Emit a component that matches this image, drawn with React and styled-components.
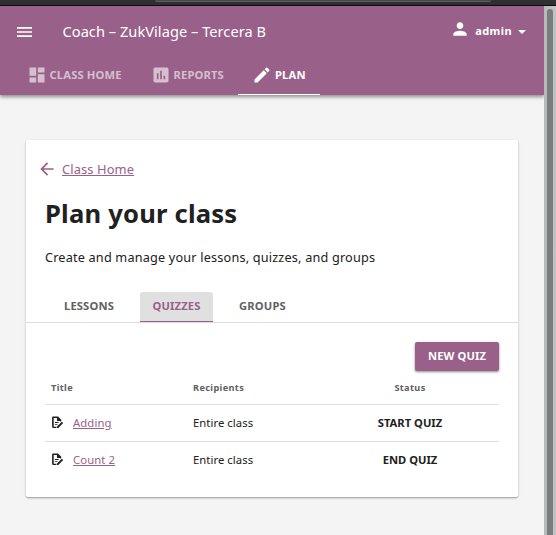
import React from 'react';
import styled, { createGlobalStyle } from 'styled-components';

const GlobalStyle = createGlobalStyle`
  * { box-sizing: border-box; }
  html, body { margin: 0; height: 100%; overflow: hidden; }
  body { background: #f4f4f4; color: #212121; font-family: "Noto Sans", sans-serif; }
`;

const purple = '#996189';

const Window = styled.div`
  height: 535px;
  display: flex;
  flex-direction: column;
`;
const BrowserEdge = styled.div`
  flex: none;
  height: 6px;
  background: #2f2f31;
  border-bottom: 1px solid #0c0c0d;
  padding-left: 155px;
`;
const AddressBar = styled.div`
  width: 336px;
  height: 2px;
  background: #474749;
  border-bottom: 1px solid #5f5f62;
  border-radius: 0 0 3px 3px;
`;
const Viewport = styled.div`
  flex: 1;
  display: flex;
  min-height: 0;
`;
const Page = styled.main`
  width: 544px;
  overflow: hidden;
`;
const Scrollbar = styled.div`
  width: 12px;
  padding: 3px 3px 0;
  background: linear-gradient(90deg, #b5b9b8, #c4c4c4);
`;
const Thumb = styled.div`
  height: 100%;
  background: #787e7e;
  border-radius: 3px 3px 0 0;
`;
const AppBar = styled.header`
  height: 89px;
  background: ${purple};
  color: #fff;
  box-shadow: 0 2px 4px rgba(0,0,0,.25), 0 2px 3px rgba(0,0,0,.2);
`;
const TopRow = styled.div`
  height: 50px;
  display: flex;
  align-items: center;
  padding: 1px 18px 0 15px;
`;
const AppTitle = styled.div`
  flex: 1;
  margin-left: 27.5px;
  padding-bottom: 2px;
  font-size: 14.6px;
  letter-spacing: 0.04px;
  line-height: 20px;
  white-space: nowrap;
`;
const UserButton = styled.div`
  display: flex;
  align-items: center;
  font-size: 11px;
  letter-spacing: 0.4px;
  font-weight: 700;
  padding-bottom: 2px;
`;
const UserIconSlot = styled.span`
  padding-bottom: 3px;
`;
const UserName = styled.span`
  margin: 0 6px 0 5px;
`;
const Caret = styled.span`
  border: 4px solid transparent;
  border-top-color: #fff;
  border-bottom: 0;
  margin-top: 2px;
`;
const NavRow = styled.nav`
  height: 39px;
  display: flex;
  padding-left: 11px;
`;
const NavItem = styled.a`
  height: 39px;
  width: ${p => p.$width}px;
  display: flex;
  align-items: center;
  gap: ${p => (p.$active ? 3 : 2.5)}px;
  padding: 0 0 2px ${p => (p.$active ? 14 : 16)}px;
  color: ${p => (p.$active ? '#fff' : 'rgba(255,255,255,.6)')};
  box-shadow: inset 0 -1px ${p => (p.$active ? '#fff' : 'transparent')};
  font-size: 11.2px;
  letter-spacing: 0.15px;
  font-weight: 700;
  white-space: nowrap;
`;
const Icon = styled.svg`
  flex: none;
  display: block;
  width: ${p => p.$size || 20}px;
  height: ${p => p.$size || 20}px;
  fill: currentColor;
`;
const Card = styled.section`
  width: 492px;
  height: 357px;
  margin: 45px 0 0 26px;
  background: #fff;
  border-radius: 2px;
  box-shadow: 0 1px 3px rgba(0,0,0,.2), 0 1px 1px rgba(0,0,0,.2);
`;
const BackRow = styled.div`
  display: flex;
  align-items: center;
  height: 20px;
  padding-left: 11px;
  margin-bottom: 23px;
  color: ${purple};
`;
const Link = styled.a`
  color: ${purple};
  font-size: ${p => p.$size || 12}px;
  text-decoration: underline;
  margin-left: ${p => p.$gap}px;
  letter-spacing: 0.1px;
`;
const CardHead = styled.div`
  padding-top: 19px;
`;
const Heading = styled.h1`
  margin: 0 0 22px 19px;
  font-size: 25.6px;
  letter-spacing: 0.2px;
  line-height: 24px;
  font-weight: 700;
`;
const Intro = styled.p`
  margin: 0 0 26px 19px;
  font-size: 12.7px;
  letter-spacing: 0.18px;
  line-height: 18px;
`;
const Tabs = styled.div`
  height: 31px;
  border-bottom: 1px solid #dedede;
  display: flex;
  padding-left: 26px;
  gap: 14px;
`;
const Tab = styled.div`
  height: 30px;
  width: ${p => p.$width}px;
  display: flex;
  align-items: center;
  justify-content: center;
  padding-bottom: 3px;
  border-radius: 3px 3px 0 0;
  font-size: 11.2px;
  letter-spacing: 0.15px;
  font-weight: 700;
  color: ${p => (p.$active ? purple : '#616161')};
  background: ${p => (p.$active ? '#e0e0e0' : 'transparent')};
  box-shadow: inset 0 -1px ${p => (p.$active ? purple : 'transparent')};
`;
const Actions = styled.div`
  display: flex;
  justify-content: flex-end;
  padding: 19px 19px 0 0;
`;
const PrimaryButton = styled.button`
  width: 84px;
  height: 29px;
  padding: 0 0 2px;
  border: 0;
  border-radius: 2px;
  background: ${purple};
  color: #fff;
  font: 700 11.2px "Noto Sans", sans-serif;
  letter-spacing: 0.1px;
  box-shadow: 0 1px 3px rgba(0,0,0,.3), 0 1px 2px rgba(0,0,0,.2);
`;
const Table = styled.div`
  margin: 0 19px;
`;
const Row = styled.div`
  display: grid;
  grid-template-columns: 142px 171px 92px;
  align-items: center;
  height: ${p => (p.$head ? 34 : 37)}px;
  padding: 0 0 ${p => (p.$head ? 0 : 1)}px 6px;
  font-size: ${p => (p.$head ? 9.2 : 11.3)}px;
  letter-spacing: ${p => (p.$head ? 0.35 : 0.05)}px;
  font-weight: ${p => (p.$head ? 700 : 400)};
  color: ${p => (p.$head ? '#616161' : '#212121')};
  border-bottom: 1px solid ${p => (p.$last ? 'transparent' : '#dedede')};
`;
const Cell = styled.div`
  display: flex;
  align-items: center;
`;
const Status = styled.div`
  text-align: center;
  font-weight: 700;
`;
const StatusAction = styled(Status)`
  font-size: 11.2px;
  letter-spacing: 0;
`;

const QuizIcon = () => (
  <Icon $size={13} viewBox="0 0 24 24">
    <path d="M4 1h9l6 6v2l-2 2V9h-6V3.500H5V20h5v2H4c-1 0-2-1-2-2V3c0-1 1-2 2-2z" />
    <path d="M7 11h7v1.800H7zM7 15h5v1.800H7zM11 19.500l9-9 2.500 2.500-9 9H11z" />
  </Icon>
);

const quizzes = [
  { title: 'Adding', status: 'START QUIZ' },
  { title: 'Count 2', status: 'END QUIZ' },
];

export default function App() {
  return (
    <Window>
      <GlobalStyle />
      <BrowserEdge><AddressBar /></BrowserEdge>
      <Viewport>
        <Page>
          <AppBar>
            <TopRow>
              <Icon viewBox="0.600 0 24 24">
                <path d="M3 18h18v-2H3v2zm0-5h18v-2H3v2zm0-7v2h18V6H3z" />
              </Icon>
              <AppTitle>Coach – ZukVilage – Tercera B</AppTitle>
              <UserButton>
                <UserIconSlot>
                  <Icon viewBox="0 0 24 24">
                    <path d="M12 12c2.210 0 4-1.790 4-4s-1.790-4-4-4-4 1.790-4 4 1.790 4 4 4zm0 2c-2.670 0-8 1.340-8 4v2h16v-2c0-2.660-5.330-4-8-4z" />
                  </Icon>
                </UserIconSlot>
                <UserName>admin</UserName>
                <Caret />
              </UserButton>
            </TopRow>
            <NavRow>
              <NavItem $width={124}>
                <Icon viewBox="0 0 24 24"><path d="M3 13h8V3H3v10zm0 8h8v-6H3v6zm10 0h8V11h-8v10zm0-18v6h8V3h-8z" /></Icon>
                <span>CLASS HOME</span>
              </NavItem>
              <NavItem $width={103}>
                <Icon viewBox="0 0 24 24"><path d="M19 3H5c-1.100 0-2 .9-2 2v14c0 1.100.9 2 2 2h14c1.100 0 2-.9 2-2V5c0-1.100-.9-2-2-2zM9 17H7v-7h2v7zm4 0h-2V7h2v10zm4 0h-2v-4h2v4z" /></Icon>
                <span>REPORTS</span>
              </NavItem>
              <NavItem $width={82} $active>
                <Icon viewBox="0 0 24 24"><path d="M3 17.250V21h3.750L17.810 9.940l-3.750-3.750L3 17.250zM20.710 7.040c.39-.39.39-1.020 0-1.410l-2.340-2.340c-.39-.39-1.020-.39-1.410 0l-1.830 1.830 3.750 3.750 1.830-1.830z" /></Icon>
                <span>PLAN</span>
              </NavItem>
            </NavRow>
          </AppBar>
          <Card>
            <CardHead>
              <BackRow>
                <Icon $size={20} viewBox="0 0 24 24"><path d="M20 11H7.830l5.590-5.590L12 4l-8 8 8 8 1.410-1.410L7.830 13H20v-2z" /></Icon>
                <Link $size={12.9} $gap={5}>Class Home</Link>
              </BackRow>
              <Heading>Plan your class</Heading>
              <Intro>Create and manage your lessons, quizzes, and groups</Intro>
            </CardHead>
            <Tabs>
              <Tab $width={74}>LESSONS</Tab>
              <Tab $width={73} $active>QUIZZES</Tab>
              <Tab $width={71}>GROUPS</Tab>
            </Tabs>
            <Actions><PrimaryButton>NEW QUIZ</PrimaryButton></Actions>
            <Table>
              <Row $head><span>Title</span><span>Recipients</span><Status>Status</Status></Row>
              {quizzes.map((q, i) => (
                <Row key={q.title} $last={i === quizzes.length - 1}>
                  <Cell><QuizIcon /><Link $size={11.3} $gap={9}>{q.title}</Link></Cell>
                  <span>Entire class</span>
                  <StatusAction>{q.status}</StatusAction>
                </Row>
              ))}
            </Table>
          </Card>
        </Page>
        <Scrollbar><Thumb /></Scrollbar>
      </Viewport>
    </Window>
  );
}
